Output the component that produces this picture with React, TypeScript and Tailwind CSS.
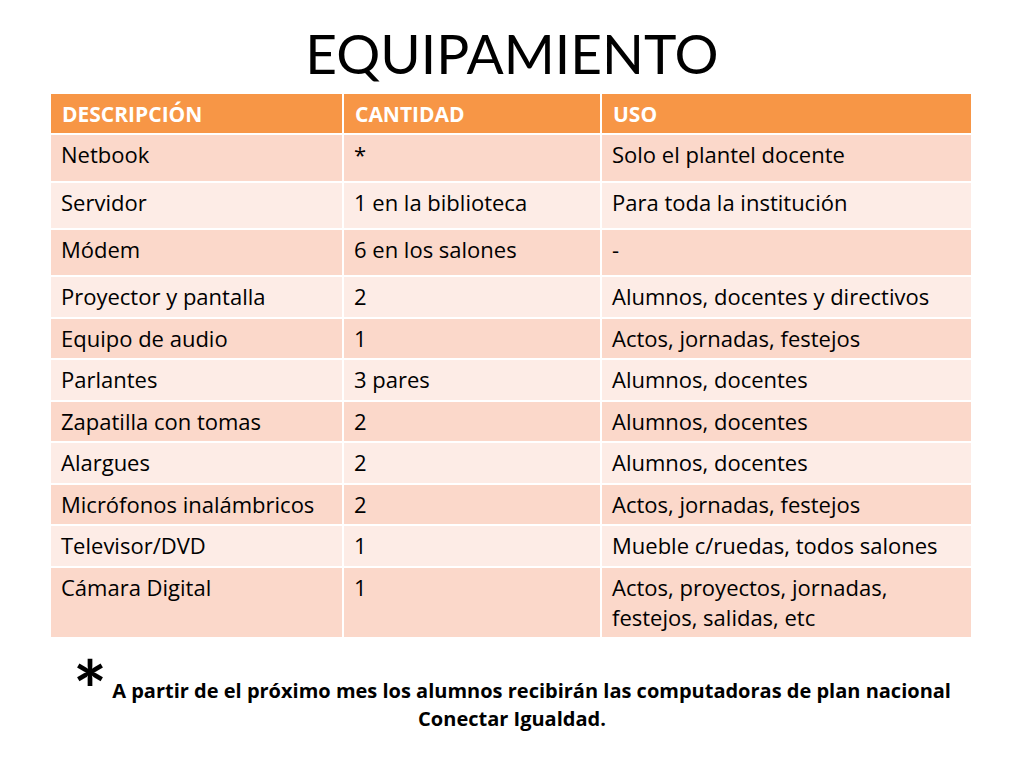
const ROWS: { cells: (string | string[])[]; h: number }[] = [
  { cells: ["Netbook", "*", "Solo el plantel docente"], h: 46 },
  { cells: ["Servidor", "1 en la biblioteca", "Para toda la institución"], h: 45 },
  { cells: ["Módem", "6 en los salones", "-"], h: 45 },
  { cells: ["Proyector y pantalla", "2", "Alumnos, docentes y directivos"], h: 40 },
  { cells: ["Equipo de audio", "1", "Actos, jornadas, festejos"], h: 39 },
  { cells: ["Parlantes", "3 pares", "Alumnos, docentes"], h: 40 },
  { cells: ["Zapatilla con tomas", "2", "Alumnos, docentes"], h: 39 },
  { cells: ["Alargues", "2", "Alumnos, docentes"], h: 40 },
  { cells: ["Micrófonos inalámbricos", "2", "Actos, jornadas, festejos"], h: 39 },
  { cells: ["Televisor/DVD", "1", "Mueble c/ruedas, todos salones"], h: 40 },
  {
    cells: ["Cámara Digital", "1", ["Actos, proyectos, jornadas,", "festejos, salidas, etc"]],
    h: 69,
  },
];

const lato = { fontFamily: "Lato, 'Open Sans', sans-serif" };
const body = { fontFamily: "'Open Sans', Lato, sans-serif" };

export default function App() {
  return (
    <div className="w-[1024px] h-[768px] bg-white text-black overflow-hidden" style={body}>
      <h1
        className="pt-[26px] h-[94px] text-center text-[55px] leading-[55px] font-normal"
        style={lato}
      >
        EQUIPAMIENTO
      </h1>

      <div className="ml-[51px] w-[920px] flex flex-col gap-[2px]">
        <div className="grid grid-cols-[291px_256px_369px] gap-[2px] h-[39px]">
          {["DESCRIPCIÓN", "CANTIDAD", "USO"].map((t) => (
            <div
              key={t}
              className="bg-[#f79646] text-white font-bold text-[21px] leading-[30px] pt-[5px] pl-[11px]"
            >
              {t}
            </div>
          ))}
        </div>

        {ROWS.map((row, i) => (
          <div
            key={i}
            className="grid grid-cols-[291px_256px_369px] gap-[2px]"
            style={{ height: row.h }}
          >
            {row.cells.map((c, j) => (
              <div
                key={j}
                className={`${
                  i % 2 === 0 ? "bg-[#fbd8ca]" : "bg-[#fdece6]"
                } text-[22px] leading-[30px] pt-[4px] pl-[10px] pr-[2px] whitespace-nowrap`}
              >
                {Array.isArray(c)
                  ? c.map((line) => <div key={line}>{line}</div>)
                  : c}
              </div>
            ))}
          </div>
        ))}
      </div>

      <p className="mt-[30px] text-center font-bold text-[20px] leading-[28px]">
        <span className="text-[80px] leading-[0] relative top-[22px]" style={lato}>
          *
        </span>{" "}
        A partir de el próximo mes los alumnos recibirán las computadoras de plan nacional
        <br />
        Conectar Igualdad.
      </p>
    </div>
  );
}
